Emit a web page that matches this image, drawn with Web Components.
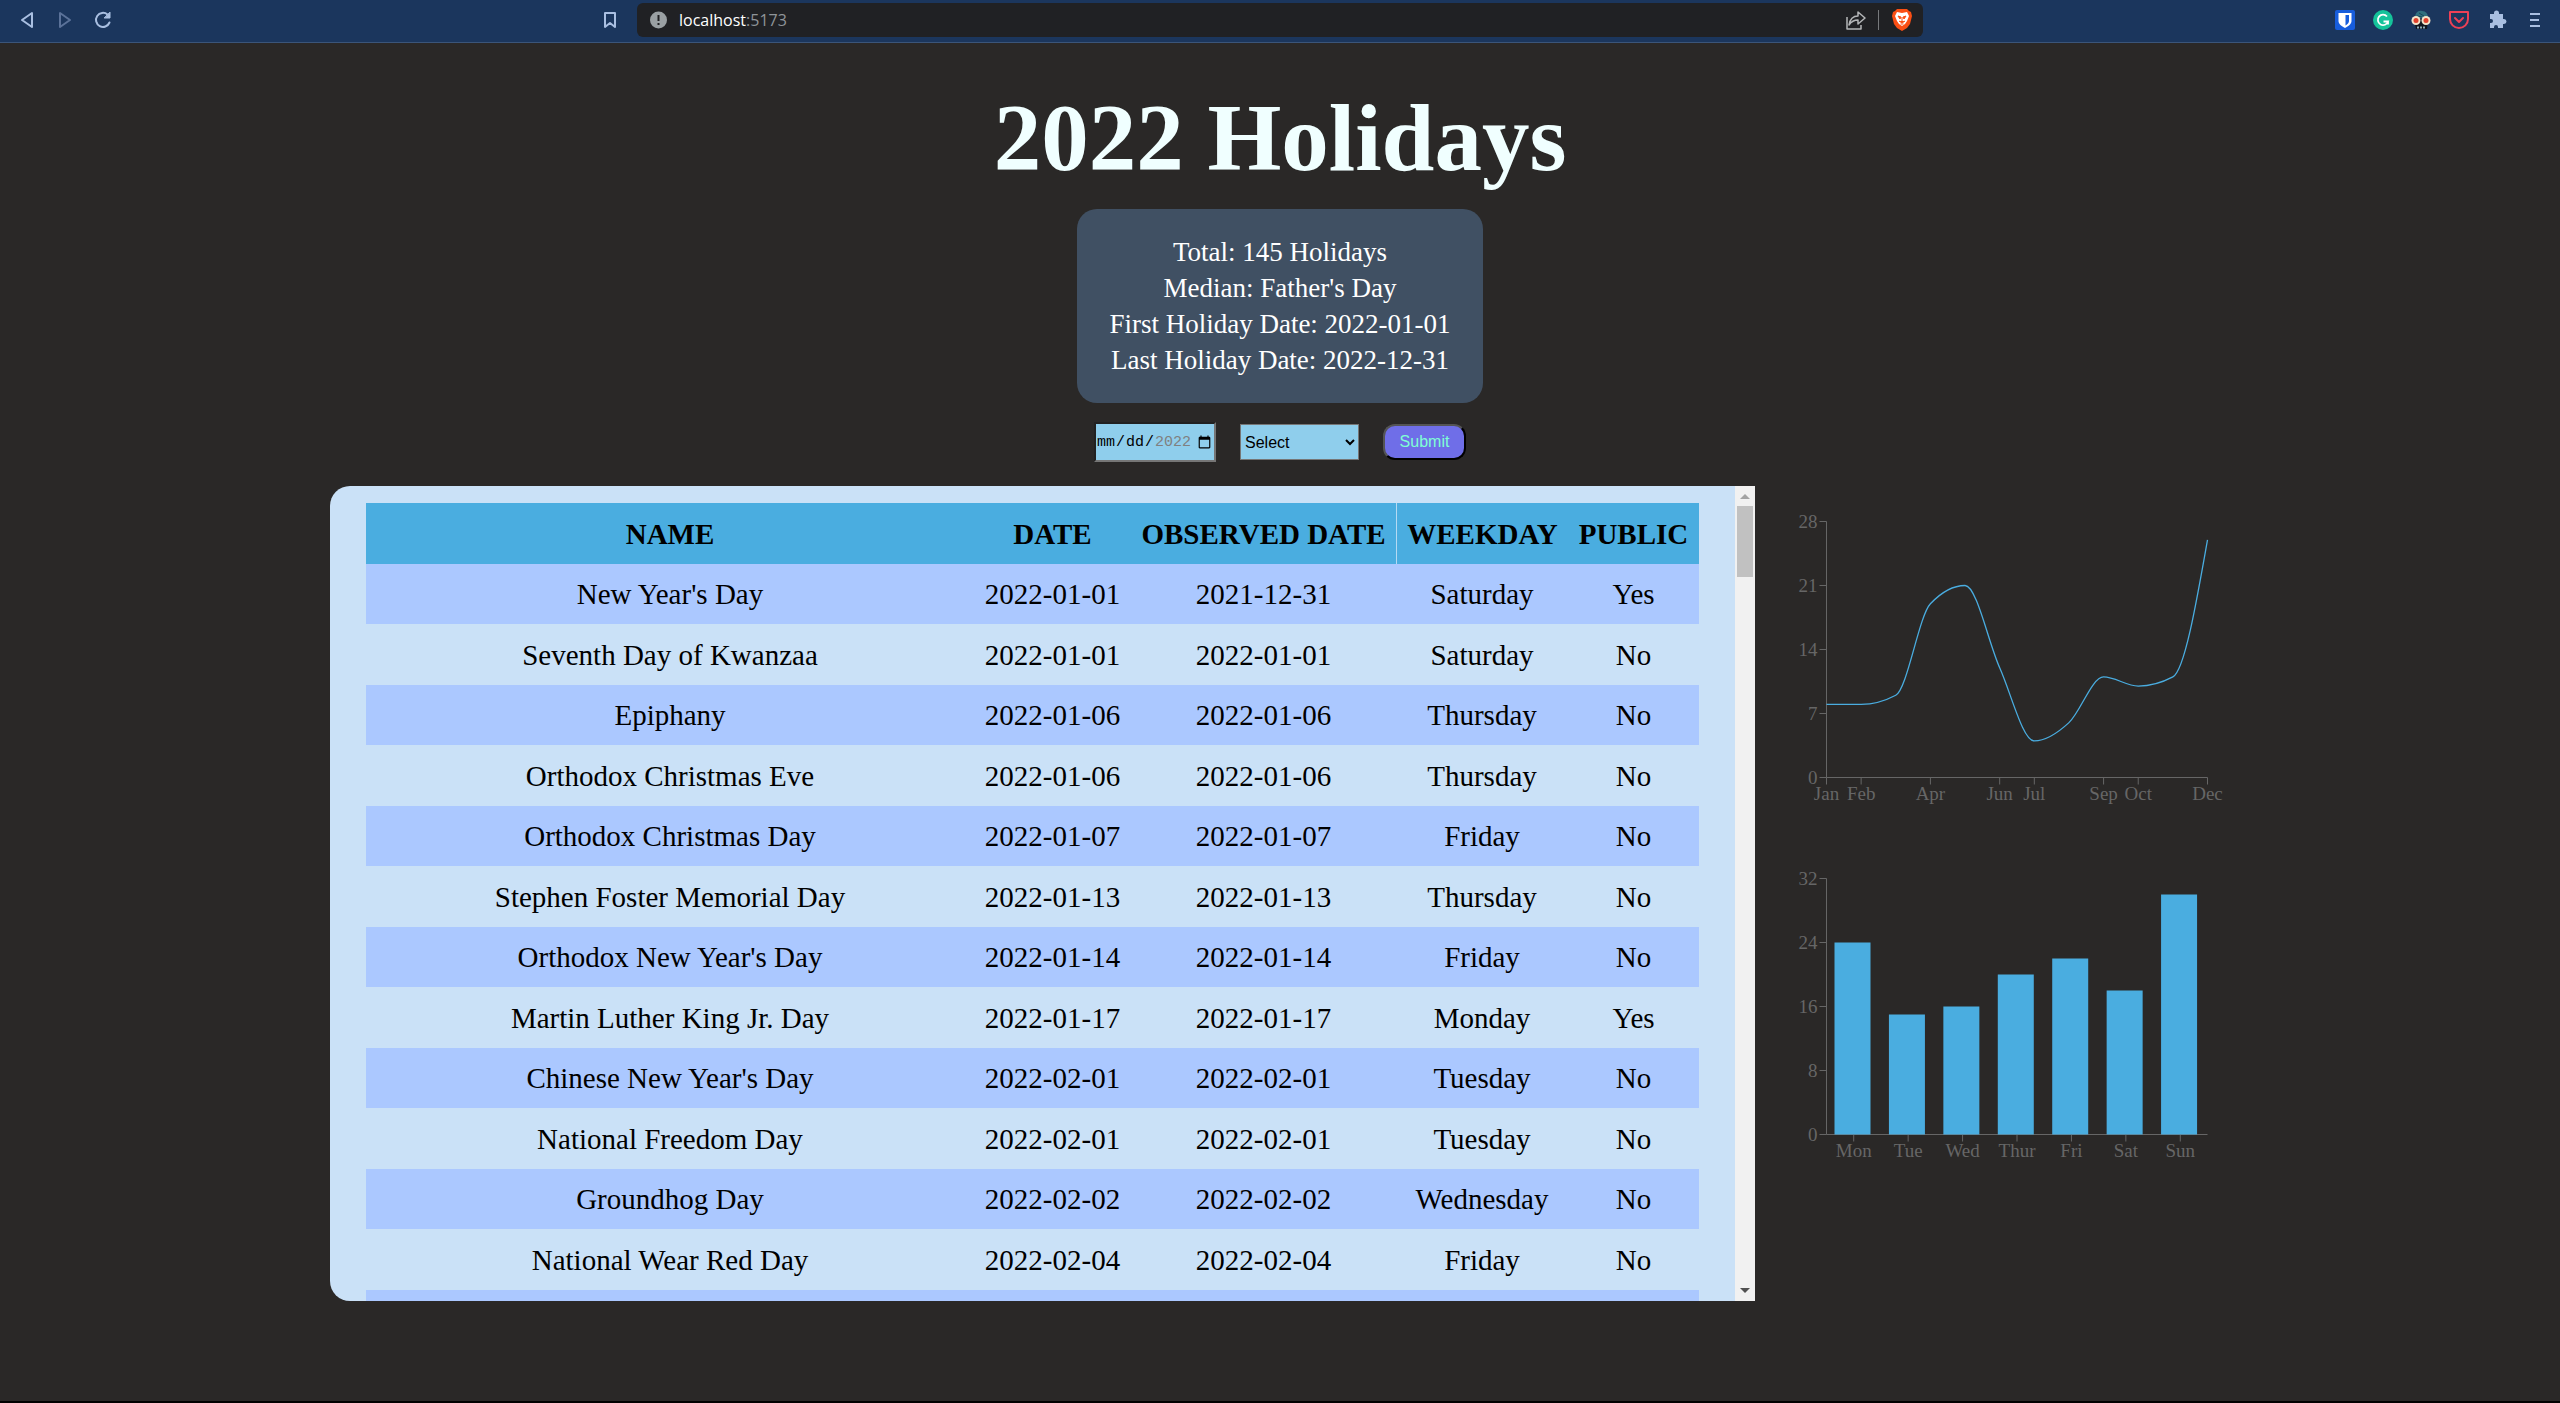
<!DOCTYPE html>
<html lang="en-US">
<head>
<meta charset="utf-8">
<title>2022 Holidays</title>
<style>
html { background: #2a2827; }
body { margin: 0; font-family: "Liberation Serif", "Times New Roman", serif; }
</style>
</head>
<body>
<holiday-app></holiday-app>
<script>
const define = (name, html, setup) => customElements.define(name, class extends HTMLElement {
  constructor() {
    super();
    this.attachShadow({ mode: "open" }).innerHTML = html;
  }
  connectedCallback() { if (setup) setup(this.shadowRoot, this); }
});

/* Toolbar button that wraps one icon */
define("tool-button", `
<style>
:host { display: block; }
button { display: flex; align-items: center; justify-content: center; width: 38px; height: 38px; padding: 0; border: 0; background: none; color: inherit; }
</style>
<button type="button"><slot></slot></button>`, (root, el) => {
  root.querySelector("button").setAttribute("aria-label", el.getAttribute("label"));
});

define("browser-bar", `
<style>
:host { display: grid; grid-template-columns: 1fr minmax(0, 1286px) 1fr; align-items: start; height: 42px; border-bottom: 1px solid #3b5579; background: #1b365d; color: #a9bfe1; }
svg { display: block; }
.side { display: flex; align-items: center; height: 40px; }
.left { padding: 0 8px; }
.left .mark { margin-left: auto; }
.right { justify-content: flex-end; padding-right: 6px; }
.dim { color: #5b7299; }
.address { display: flex; align-items: center; gap: 12px; box-sizing: border-box; height: 34px; margin-top: 3px; padding: 0 10px 0 13px; border-radius: 6px; background: #202124; color: #fff; font: 16px/34px "Open Sans", "Noto Sans", sans-serif; }
.address .port { color: #8f9499; }
.address .url { flex: 1; }
.address .rule { width: 1px; height: 20px; background: #77797c; }
</style>
<nav class="side left" aria-label="Navigation">
  <tool-button label="Back"><svg width="16" height="20" fill="none" stroke="currentColor" stroke-width="2" stroke-linejoin="round"><path d="M13 3v14L3 10z"/></svg></tool-button>
  <tool-button label="Forward" class="dim"><svg width="16" height="20" fill="none" stroke="currentColor" stroke-width="2" stroke-linejoin="round"><path d="M3 3v14l10-7z"/></svg></tool-button>
  <tool-button label="Reload"><svg width="20" height="20" fill="none" stroke="currentColor" stroke-width="2" stroke-linecap="round"><path d="M16.500 12.500A7 7 0 1 1 14.500 4.500"/><path d="M17 2.500V8h-5.500z" fill="currentColor" stroke-width="1"/></svg></tool-button>
  <tool-button label="Bookmark" class="mark"><svg width="16" height="20" fill="none" stroke="currentColor" stroke-width="2" stroke-linejoin="round"><path d="M3 3h10v14l-5-4-5 4z"/></svg></tool-button>
</nav>
<div class="address">
  <svg width="17" height="18"><circle cx="8.500" cy="9" r="8.500" fill="#9aa0a3"/><path d="M8.500 4v6M8.500 12v2" stroke="#202124" stroke-width="2"/></svg>
  <span class="url">localhost<span class="port">:5173</span></span>
  <svg width="22" height="20" fill="none" stroke="#b4b6b8" stroke-width="1.500" stroke-linejoin="round"><path d="M3 7v12h14v-4"/><path d="M5 15c1-6 4-9 9-9V2l7 6-7 6v-4c-4 0-7 2-9 5z"/></svg>
  <span class="rule"></span>
  <svg width="22" height="24"><path d="M6 1h10l2 2 2 1 1 4-2 8-3 4-5 3-5-3-3-4L1 8l1-4 2-1z" fill="#fb4f14"/><path d="M6 4l5 1 5-1 2 4-2 5-2 3-3 2-3-2-2-3-2-5z" fill="#fff"/><path d="M7 8l3 1-1 2zm8 0l-3 1 1 2zM11 9v4M8 13l3 2 3-2M9.500 16h3" stroke="#fb4f14" stroke-width="1" fill="#fb4f14"/></svg>
</div>
<div class="side right">
  <tool-button label="Password vault"><svg width="20" height="20"><rect width="20" height="20" rx="2" fill="#175ddc"/><path d="M3.500 3h13v8c0 3-3 5-6.500 7-3.500-2-6.500-4-6.500-7z" fill="#fff"/><path d="M10.500 5H14v6c0 2-1.500 3-3.500 4.500z" fill="#175ddc"/></svg></tool-button>
  <tool-button label="Writing assistant"><svg width="20" height="20" fill="none"><circle cx="10" cy="10" r="10" fill="#15c39a"/><path d="M14 6.500A5.200 5.200 0 1 0 15 11.500H10.500M15 11.500v3" stroke="#fff" stroke-width="1.800"/></svg></tool-button>
  <tool-button label="Skull extension"><svg width="20" height="20"><path d="M4 8c0-5 3-8 7-7 4 0 6 3 6 7z" fill="#2f6f7e"/><path d="M3 9h14l-1 10H5z" fill="#10151d"/><path d="M8 3l5 3M6 6l5 1" stroke="#184657"/><circle cx="5" cy="10.500" r="4.500" fill="#f3e3c8"/><circle cx="15" cy="10.500" r="4.500" fill="#f3e3c8"/><circle cx="5" cy="10.500" r="2.500" fill="#e2412c"/><circle cx="15" cy="10.500" r="2.500" fill="#e2412c"/><path d="M6 17.500h8" stroke="#8fa9b4" stroke-width="2" stroke-dasharray="2 1"/></svg></tool-button>
  <tool-button label="Save page"><svg width="20" height="20" fill="none" stroke="#ee4056" stroke-width="2" stroke-linecap="round" stroke-linejoin="round"><path d="M1 2h18v7a9 9 0 0 1-18 0z"/><path d="M6 8l4 4 4-4"/></svg></tool-button>
  <tool-button label="Extensions"><svg width="20" height="20" fill="currentColor"><path d="M3 4h4V3a2.500 2.500 0 0 1 5 0v1h4v5h1a2.300 2.300 0 0 1 0 5h-1v4h-5v-1a2 2 0 0 0-4 0v1H3v-5h1a2 2 0 0 0 0-4H3z"/></svg></tool-button>
  <tool-button label="Menu"><svg width="12" height="20" stroke="currentColor" stroke-width="2"><path d="M1 4h10M1 10h9M1 16h10"/></svg></tool-button>
</div>`);

define("summary-card", `
<style>
:host { display: block; padding: 25px 32px; border-radius: 20px; background: #405063; color: #fff; font-size: 27px; line-height: 36px; text-align: center; }
p { margin: 0; }
</style>
<p>Total: 145 Holidays</p>
<p>Median: Father's Day</p>
<p>First Holiday Date: 2022-01-01</p>
<p>Last Holiday Date: 2022-12-31</p>`);

define("filter-bar", `
<style>
:host { display: block; }
form { display: flex; align-items: center; gap: 24px; margin: 0; }
input, select, button { box-sizing: border-box; margin: 0; font: 16px "Liberation Sans", Arial, sans-serif; }
input { width: 122px; height: 40px; padding: 0; border: 2px inset #767676; background: #8fceec; color: #000; font: 15px "Liberation Mono", monospace; }
input::-webkit-datetime-edit { padding: 0; font: 15px "Liberation Mono", monospace; }
input::-webkit-datetime-edit-fields-wrapper { padding: 0; }
input::-webkit-calendar-picker-indicator { margin-left: 0; padding: 2px; }
select { width: 119px; height: 36px; border: 1px solid #767676; border-radius: 0; background-color: #8fceec; color: #000; }
button { width: 83px; height: 36px; padding: 0; border: 2px outset #000; border-radius: 12px; background: #6f6ee8; color: #7fffd4; }
</style>
<form>
  <input type="date" aria-label="Date" min="2022-01-01" max="2022-12-31">
  <select aria-label="Filter"><option>Select</option></select>
  <button type="button">Submit</button>
</form>`);

define("scroll-rail", `
<style>
:host { display: flex; flex-direction: column; flex: 0 0 20px; box-sizing: border-box; background: #f1f1f1; }
svg { display: block; flex: none; }
.thumb { height: 71px; margin: 0 2px; background: #c1c1c1; }
.down { margin-top: auto; }
</style>
<svg width="20" height="20"><path d="M5 13h10l-5-5z" fill="#a3a3a3"/></svg>
<div class="thumb"></div>
<svg class="down" width="20" height="20"><path d="M5 7h10l-5 5z" fill="#505050"/></svg>`);

const HOLIDAYS = [
  ["New Year's Day", "2022-01-01", "2021-12-31", "Saturday", "Yes"],
  ["Seventh Day of Kwanzaa", "2022-01-01", "2022-01-01", "Saturday", "No"],
  ["Epiphany", "2022-01-06", "2022-01-06", "Thursday", "No"],
  ["Orthodox Christmas Eve", "2022-01-06", "2022-01-06", "Thursday", "No"],
  ["Orthodox Christmas Day", "2022-01-07", "2022-01-07", "Friday", "No"],
  ["Stephen Foster Memorial Day", "2022-01-13", "2022-01-13", "Thursday", "No"],
  ["Orthodox New Year's Day", "2022-01-14", "2022-01-14", "Friday", "No"],
  ["Martin Luther King Jr. Day", "2022-01-17", "2022-01-17", "Monday", "Yes"],
  ["Chinese New Year's Day", "2022-02-01", "2022-02-01", "Tuesday", "No"],
  ["National Freedom Day", "2022-02-01", "2022-02-01", "Tuesday", "No"],
  ["Groundhog Day", "2022-02-02", "2022-02-02", "Wednesday", "No"],
  ["National Wear Red Day", "2022-02-04", "2022-02-04", "Friday", "No"],
  ["", "", "", "", ""]
];

define("holiday-table", `
<style>
:host { display: flex; height: 815px; overflow: hidden; border-radius: 20px 0 0 20px; background: #cae1f7; }
.view { flex: 1; min-width: 0; overflow: hidden; padding: 17px 36px 0; }
table { width: 100%; border-collapse: separate; border-spacing: 0; table-layout: fixed; font-size: 29px; line-height: 32px; color: #000; text-align: center; }
.date { width: 157px; } .observed { width: 265px; } .weekday { width: 172px; } .public { width: 131px; }
th, td { padding: 0; white-space: nowrap; }
th { height: 61px; background: #4aade0; font-weight: bold; }
th:nth-child(4) { border-left: 1px solid #b5daf3; box-sizing: border-box; }
td { height: 61px; }
tr:nth-child(odd) td { height: 60px; background: #abc8ff; }
</style>
<div class="view">
<table>
  <colgroup><col><col class="date"><col class="observed"><col class="weekday"><col class="public"></colgroup>
  <thead><tr><th>NAME</th><th>DATE</th><th>OBSERVED DATE</th><th>WEEKDAY</th><th>PUBLIC</th></tr></thead>
  <tbody></tbody>
</table>
</div>
<scroll-rail></scroll-rail>`, root => {
  root.querySelector("tbody").innerHTML = HOLIDAYS.map(r => "<tr>" + r.map(c => `<td>${c}</td>`).join("") + "</tr>").join("");
});

/* Plot area inside each chart's own drawing */
const PLOT = { left: 71.5, top: 35.5, width: 381, height: 256 };
const CHART_STYLE = `
<style>
:host { display: block; }
svg { display: block; width: 100%; height: auto; overflow: visible; }
text { font: 19px "Liberation Serif", "Times New Roman", serif; fill: #666; }
.axis { stroke: #666; fill: none; }
</style>`;
const axes = (max, step, labels) => {
  const { left, top, width, height } = PLOT, bottom = top + height;
  let lines = `M${left} ${top}V${bottom}H${left + width}`, text = "";
  for (let v = 0; v <= max; v += step) {
    const y = bottom - v / max * height;
    lines += `M${left - 7} ${y}h7`;
    text += `<text x="${left - 9}" y="${y + 6.5}" text-anchor="end">${v}</text>`;
  }
  for (const [label, x] of labels) {
    lines += `M${x} ${bottom}v7`;
    text += `<text x="${x}" y="${bottom + 22}" text-anchor="middle">${label}</text>`;
  }
  return `<path class="axis" d="${lines}"/>${text}`;
};

/* Monotone cubic interpolation through the points, left to right */
const monotone = pts => {
  const n = pts.length, d = [], t = [];
  for (let i = 0; i < n - 1; i++) d.push((pts[i + 1][1] - pts[i][1]) / (pts[i + 1][0] - pts[i][0]));
  for (let i = 1; i < n - 1; i++) {
    const p = (d[i - 1] + d[i]) / 2;
    t[i] = (Math.sign(d[i - 1]) + Math.sign(d[i])) * Math.min(Math.abs(d[i - 1]), Math.abs(d[i]), Math.abs(p) / 2) || 0;
  }
  t[0] = (3 * d[0] - t[1]) / 2;
  t[n - 1] = (3 * d[n - 2] - t[n - 2]) / 2;
  let path = `M${pts[0]}`;
  for (let i = 0; i < n - 1; i++) {
    const h = (pts[i + 1][0] - pts[i][0]) / 3;
    path += `C${pts[i][0] + h},${pts[i][1] + h * t[i]} ${pts[i + 1][0] - h},${pts[i + 1][1] - h * t[i + 1]} ${pts[i + 1]}`;
  }
  return path;
};

define("month-chart", CHART_STYLE, root => {
  const data = [8, 8, 9, 19, 21, 12, 4, 6, 11, 10, 11, 26];
  const at = i => PLOT.left + i * PLOT.width / 11;
  const pts = data.map((v, i) => [at(i), PLOT.top + PLOT.height * (1 - v / 28)]);
  const labels = [["Jan", 0], ["Feb", 1], ["Apr", 3], ["Jun", 5], ["Jul", 6], ["Sep", 8], ["Oct", 9], ["Dec", 11]].map(([l, i]) => [l, at(i)]);
  root.innerHTML = CHART_STYLE + `<svg viewBox="0 0 475 357" role="img" aria-label="Holidays per month">${axes(28, 7, labels)}<path d="${monotone(pts)}" fill="none" stroke="#4aade0" stroke-width="1.3"/></svg>`;
});

define("weekday-chart", CHART_STYLE, root => {
  const data = [["Mon", 24], ["Tue", 15], ["Wed", 16], ["Thur", 20], ["Fri", 22], ["Sat", 18], ["Sun", 30]];
  const band = PLOT.width / 7, bottom = PLOT.top + PLOT.height;
  const bars = data.map(([, v], i) => `<rect x="${PLOT.left + i * band + 8}" y="${bottom - v * 8}" width="36" height="${v * 8}" fill="#4aade0"/>`).join("");
  root.innerHTML = CHART_STYLE + `<svg viewBox="0 0 475 357" role="img" aria-label="Holidays per weekday">${axes(32, 8, data.map(([l], i) => [l, PLOT.left + (i + 0.5) * band]))}${bars}</svg>`;
});

define("holiday-app", `
<style>
:host { display: flex; flex-direction: column; box-sizing: border-box; min-height: 100vh; border-bottom: 2px solid #000; background: #2a2827; }
header { display: flex; flex-direction: column; align-items: center; padding-top: 40px; }
h1 { margin: 0 0 16px; color: #f0ffff; font-size: 95px; line-height: 110px; font-weight: bold; }
filter-bar { margin: 19px 0 24px; }
main { display: flex; align-items: flex-start; width: 100%; max-width: 1900px; margin: 0 auto; }
holiday-table { flex: 3; min-width: 0; }
.charts { flex: 1; min-width: 0; }
</style>
<browser-bar></browser-bar>
<header>
  <h1>2022 Holidays</h1>
  <summary-card></summary-card>
  <filter-bar></filter-bar>
</header>
<main>
  <holiday-table></holiday-table>
  <div class="charts">
    <month-chart></month-chart>
    <weekday-chart></weekday-chart>
  </div>
</main>`);
</script>
</body>
</html>
